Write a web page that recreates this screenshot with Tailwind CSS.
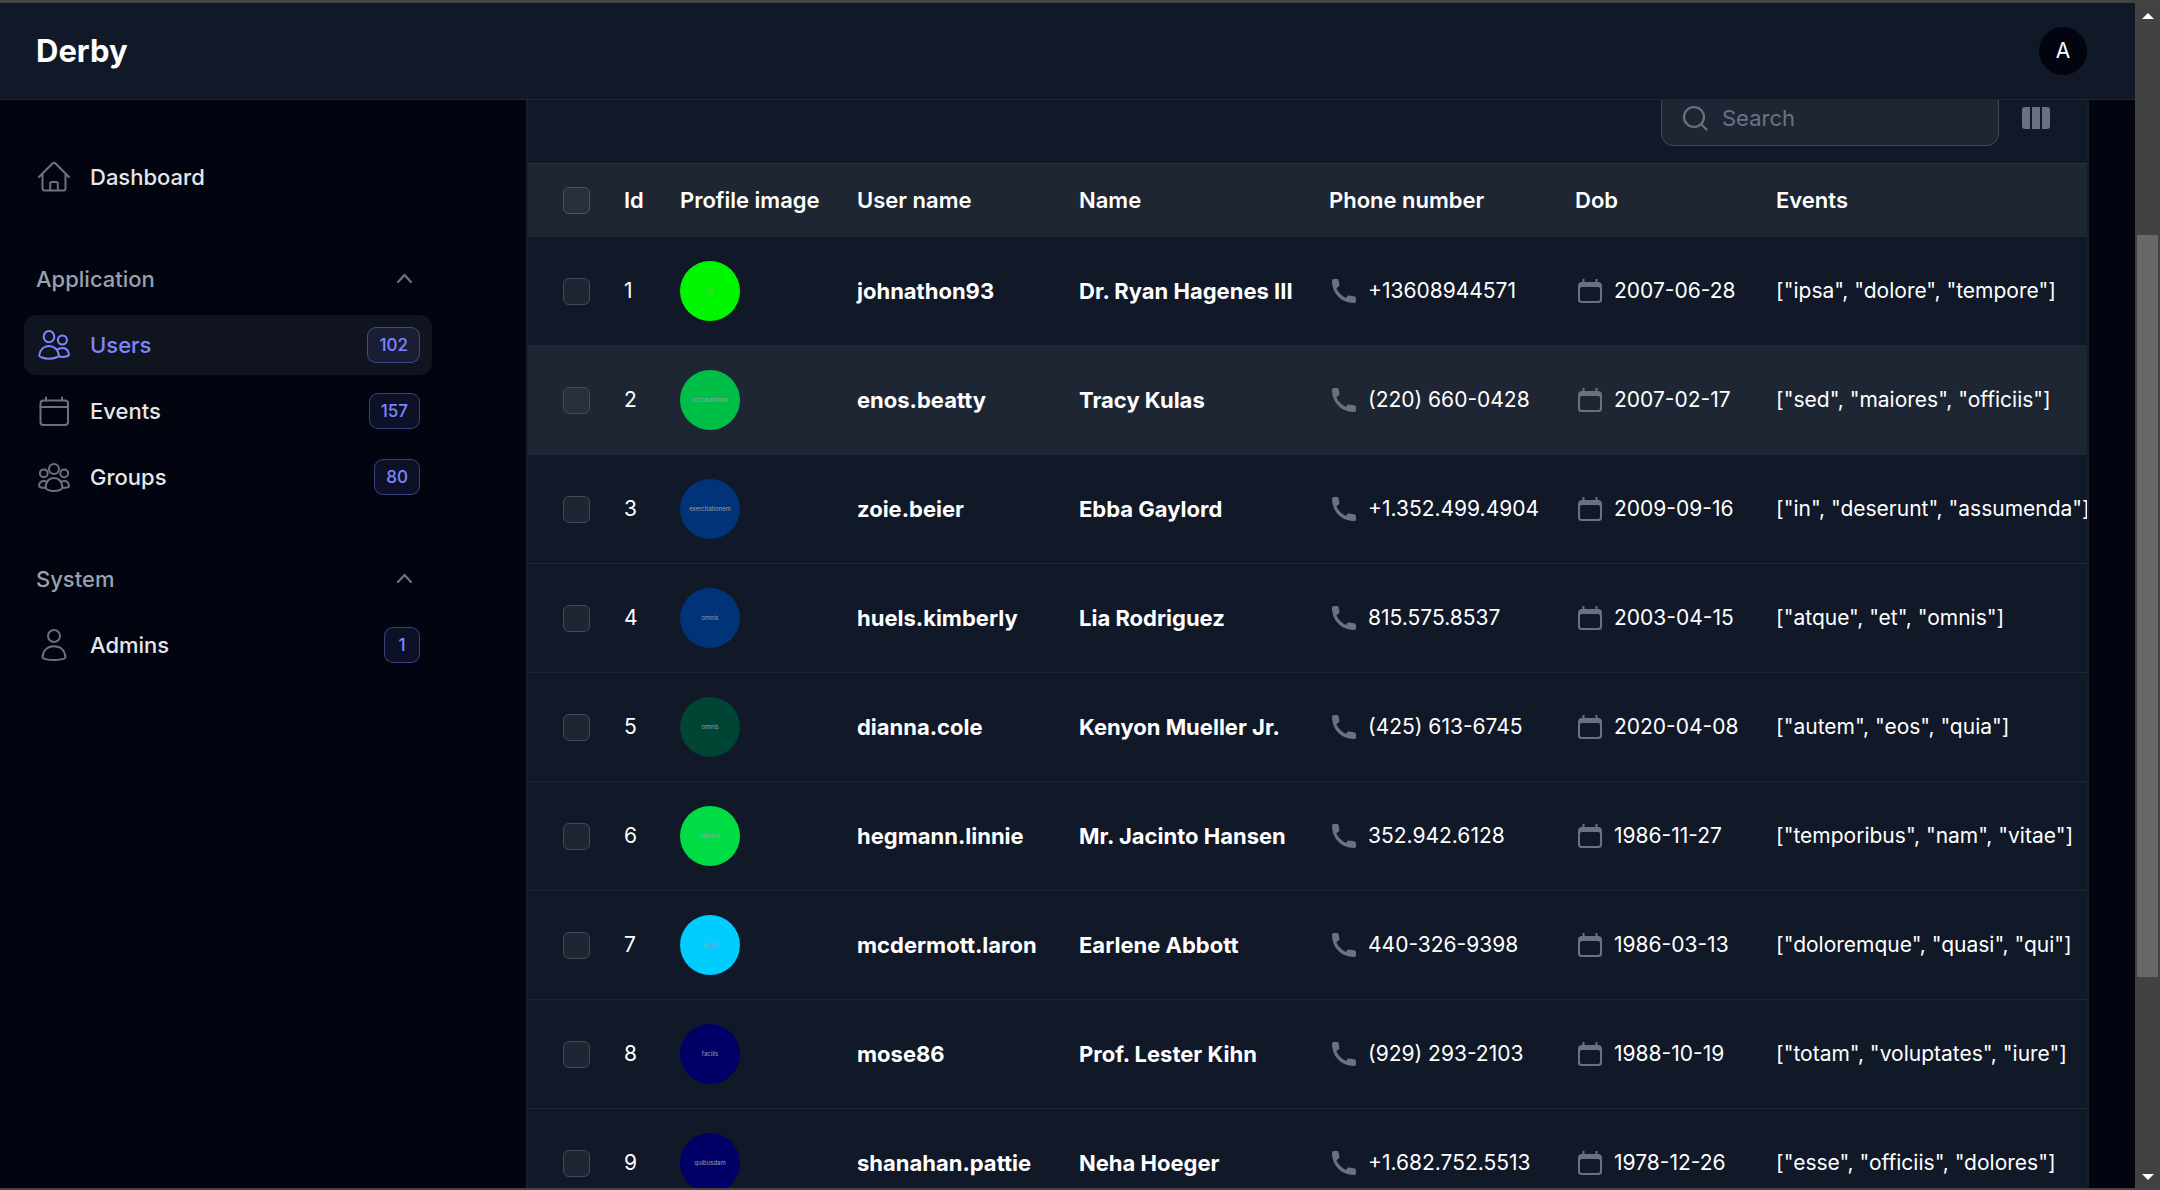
<!DOCTYPE html>
<html lang="en">
<head>
<meta charset="utf-8">
<meta name="viewport" content="width=device-width, initial-scale=1">
<title>Users - Derby</title>
<script src="https://cdn.jsdelivr.net/npm/@tailwindcss/browser@4"></script>
</head>
<body class="flex h-screen flex-col overflow-hidden border-t-[3px] border-b-2 border-[#444444] bg-[#02050f] font-['Inter','Liberation_Sans',sans-serif] text-[21px] leading-9 text-white">

<svg class="hidden" aria-hidden="true">
  <symbol id="phone" viewBox="0 0 24 24"><path fill="currentColor" d="M2 0h3c1 0 1.400.5 1.600 1.500l.8 4.200c.1.800-.1 1.400-.700 1.900L4.300 9.300c2.200 4.500 5.400 7.800 9.700 9.800l1.100-1.800c.5-.7 1.100-1 1.900-.8l5 .8c1.300.2 2 .8 2 2V22c0 1.400-.7 2-2 2C9.500 23.800.400 15.200 0 2 0 .7.7 0 2 0Z"/></symbol>
  <symbol id="cal" viewBox="0 0 24 24"><path fill="currentColor" fill-rule="evenodd" d="M4.500 0h2v3h11V0h2v3h.500a4 4 0 0 1 4 4v13.500a3.500 3.500 0 0 1-3.500 3.500h-17A3.500 3.500 0 0 1 0 20.500V7a4 4 0 0 1 4-4h.500V0ZM4 8a2 2 0 0 0-2 2v10.200A1.800 1.800 0 0 0 3.800 22h16.400a1.800 1.800 0 0 0 1.800-1.800V10a2 2 0 0 0-2-2H4Z"/></symbol>
</svg>

<div class="flex min-h-0 flex-1">
  <div class="flex min-w-0 flex-1 flex-col">
    <header class="flex h-[97px] shrink-0 items-center justify-between border-b border-[#1f2634] bg-[#111827] pr-12 pl-9">
      <a href="#" class="text-[31px] font-bold">Derby</a>
      <button type="button" aria-label="User menu" class="size-12 rounded-full bg-[#02050f]">A</button>
    </header>

    <div class="flex min-h-0 flex-1">
      <nav aria-label="Main" class="flex w-[480px] shrink-0 flex-col gap-[42px] pt-[47px] pr-12 pl-6 text-[22px] font-medium text-gray-200">
        <a href="#" class="flex h-15 items-center gap-[18px] px-3">
          <svg class="size-9 text-gray-500" viewBox="0 0 36 36" fill="none" stroke="currentColor" stroke-width="2" stroke-linecap="round" stroke-linejoin="round"><path d="M3 18 16.500 4.500c1-1 2-1 3 0L33 18M6.500 15v14.500a2 2 0 0 0 2 2h19a2 2 0 0 0 2-2V15M14.200 31.500v-7a1.500 1.500 0 0 1 1.500-1.500h4.600a1.500 1.500 0 0 1 1.500 1.500v7"/></svg>
          Dashboard
        </a>
        <section class="flex flex-col gap-1.5">
          <button type="button" class="flex h-15 items-center justify-between px-3 text-gray-400">Application
            <svg class="size-[30px] text-gray-500" viewBox="0 0 30 30" fill="none" stroke="currentColor" stroke-width="2.200" stroke-linecap="round" stroke-linejoin="round"><path d="m8 18 6.500-7 6.500 7"/></svg>
          </button>
          <a href="#" aria-current="page" class="flex h-15 items-center gap-[18px] rounded-xl bg-[#10141e] px-3 text-indigo-400">
            <svg class="size-9" viewBox="0 0 36 36" fill="none" stroke="currentColor" stroke-width="2" stroke-linejoin="round"><ellipse cx="13" cy="9.700" rx="5.300" ry="5.600"/><circle cx="26.400" cy="13" r="4.500"/><path d="M3.200 28.500C4 22.500 8 19 13 19s9.200 3.500 10 9.500c0 1-4 3.200-10 3.200s-9.800-2.200-9.800-3.200Z"/><path d="M21 22.800c1.500-1.300 3.300-1.900 5.400-1.900 3.700 0 6.200 2.600 6.600 7 0 1-3.500 2-6.600 2-1.300 0-2.400-.1-3.400-.4"/></svg>
            Users
            <span class="ml-auto flex h-9 min-w-9 items-center justify-center rounded-[9px] border border-indigo-400/40 bg-indigo-400/10 px-[11px] text-[17px] text-indigo-400">102</span>
          </a>
          <a href="#" class="flex h-15 items-center gap-[18px] px-3">
            <svg class="size-9 text-gray-500" viewBox="0 0 36 36" fill="none" stroke="currentColor" stroke-width="2" stroke-linecap="round" stroke-linejoin="round"><rect x="4.500" y="7.500" width="27.500" height="24.500" rx="3"/><path d="M4.500 14H32M10 4.500v3M26 4.500v3"/></svg>
            Events
            <span class="ml-auto flex h-9 min-w-9 items-center justify-center rounded-[9px] border border-indigo-400/40 bg-indigo-400/10 px-[11px] text-[17px] text-indigo-400">157</span>
          </a>
          <a href="#" class="flex h-15 items-center gap-[18px] px-3">
            <svg class="size-9 text-gray-500" viewBox="0 0 36 36" fill="none" stroke="currentColor" stroke-width="2" stroke-linecap="round" stroke-linejoin="round"><circle cx="18" cy="10" r="5"/><circle cx="7.800" cy="14.300" r="3.900"/><circle cx="28.200" cy="14.300" r="3.900"/><path d="M9.500 28.500C10.200 22.500 13.500 19 18 19s7.800 3.500 8.500 9.500C26.500 30 23 32 18 32s-8.500-2-8.500-3.500Z"/><path d="M11 22.800c-1-.5-2-.7-3.200-.7-2.800 0-4.500 1.900-4.800 5 0 1.200 3 1.800 6.500 1.600M25 22.800c1-.5 2-.7 3.200-.7 2.800 0 4.500 1.900 4.800 5 0 1.200-3 1.800-6.500 1.600"/></svg>
            Groups
            <span class="ml-auto flex h-9 min-w-9 items-center justify-center rounded-[9px] border border-indigo-400/40 bg-indigo-400/10 px-[11px] text-[17px] text-indigo-400">80</span>
          </a>
        </section>
        <section class="flex flex-col gap-1.5">
          <button type="button" class="flex h-15 items-center justify-between px-3 text-gray-400">System
            <svg class="size-[30px] text-gray-500" viewBox="0 0 30 30" fill="none" stroke="currentColor" stroke-width="2.200" stroke-linecap="round" stroke-linejoin="round"><path d="m8 18 6.500-7 6.500 7"/></svg>
          </button>
          <a href="#" class="flex h-15 items-center gap-[18px] px-3">
            <svg class="size-9 text-gray-500" viewBox="0 0 36 36" fill="none" stroke="currentColor" stroke-width="2" stroke-linejoin="round"><circle cx="18" cy="9" r="6"/><path d="M6.500 30.500C7 23.500 11.500 19.300 18 19.300s11 4.200 11.500 11.200c0 1-5 2.500-11.500 2.500s-11.500-1.500-11.500-2.500Z"/></svg>
            Admins
            <span class="ml-auto flex h-9 min-w-9 items-center justify-center rounded-[9px] border border-indigo-400/40 bg-indigo-400/10 px-[11px] text-[17px] text-indigo-400">1</span>
          </a>
        </section>
      </nav>

      <main class="flex min-w-0 flex-1 pr-[46px] pl-[46px]">
        <section class="min-w-0 flex-1 overflow-hidden border-x-2 border-[#171d2a] bg-[#111827]">
          <div class="flex h-[63px] items-end justify-end gap-[22px] overflow-hidden pr-9 pb-[17px]">
            <label class="flex h-14 w-[338px] shrink-0 items-center rounded-xl border border-[#414855] bg-[#1f2633] pl-5 text-gray-500">
              <svg class="size-[27px]" viewBox="0 0 27 27" fill="none" stroke="currentColor" stroke-width="2.200" stroke-linecap="round"><circle cx="12" cy="12" r="10"/><path d="m19.200 19.200 5.300 5.300"/></svg>
              <input type="search" aria-label="Search" placeholder="Search" class="ml-[13px] min-w-0 flex-1 bg-transparent text-[22px] placeholder:text-gray-500 outline-none">
            </label>
            <button type="button" aria-label="Toggle columns" class="flex h-14 w-[30px] items-center justify-center text-gray-500">
              <svg class="size-[30px]" viewBox="0 0 30 30" fill="currentColor"><path d="M4 4h5v22H4a3 3 0 0 1-3-3V7a3 3 0 0 1 3-3ZM11 4h8v22h-8ZM21 4h5a3 3 0 0 1 3 3v16a3 3 0 0 1-3 3h-5Z"/></svg>
            </button>
          </div>
          <table class="w-full table-fixed border-collapse text-left whitespace-nowrap">
            <colgroup><col class="w-24"><col class="w-14"><col class="w-[177px]"><col class="w-[222px]"><col class="w-[250px]"><col class="w-[246px]"><col class="w-[201px]"><col></colgroup>
            <thead>
              <tr class="h-[73px] border-t border-[#2a313f] bg-[#1f2633] text-[22px]">
                <th class="pl-[35px]"><input type="checkbox" aria-label="Select all" class="block size-[27px] appearance-none rounded-md border border-[#4b5260] bg-[#2a2f3c]"></th>
                <th class="font-semibold">Id</th><th class="font-semibold">Profile image</th><th class="font-semibold">User name</th><th class="font-semibold">Name</th><th class="font-semibold">Phone number</th><th class="font-semibold">Dob</th><th class="font-semibold">Events</th>
              </tr>
            </thead>
            <tbody id="rows"></tbody>
          </table>
        </section>
      </main>
    </div>
  </div>

  <div aria-hidden="true" class="flex w-[25px] shrink-0 flex-col items-center bg-[#424242] pt-2.5 pb-2">
    <svg class="h-1.5 w-3" viewBox="0 0 12 6"><path fill="#fff" d="M6 0 12 6H0Z"/></svg>
    <div class="flex w-full flex-1 flex-col px-0.5">
      <div class="grow-[216]"></div>
      <div class="grow-[742] bg-[#686868]"></div>
      <div class="grow-[197]"></div>
    </div>
    <svg class="h-1.5 w-3" viewBox="0 0 12 6"><path fill="#fff" d="M0 0H12L6 6Z"/></svg>
  </div>
</div>

<script>
const users = [
  ['johnathon93', 'Dr. Ryan Hagenes III', '+13608944571', '2007-06-28', '["ipsa", "dolore", "tempore"]', '#00f500', 'et'],
  ['enos.beatty', 'Tracy Kulas', '(220) 660-0428', '2007-02-17', '["sed", "maiores", "officiis"]', '#00bf47', 'accusantium'],
  ['zoie.beier', 'Ebba Gaylord', '+1.352.499.4904', '2009-09-16', '["in", "deserunt", "assumenda"]', '#003377', 'exercitationem'],
  ['huels.kimberly', 'Lia Rodriguez', '815.575.8537', '2003-04-15', '["atque", "et", "omnis"]', '#003377', 'omnis'],
  ['dianna.cole', 'Kenyon Mueller Jr.', '(425) 613-6745', '2020-04-08', '["autem", "eos", "quia"]', '#004433', 'omnis'],
  ['hegmann.linnie', 'Mr. Jacinto Hansen', '352.942.6128', '1986-11-27', '["temporibus", "nam", "vitae"]', '#00dd44', 'ratione'],
  ['mcdermott.laron', 'Earlene Abbott', '440-326-9398', '1986-03-13', '["doloremque", "quasi", "qui"]', '#00ccff', 'iusto'],
  ['mose86', 'Prof. Lester Kihn', '(929) 293-2103', '1988-10-19', '["totam", "voluptates", "iure"]', '#000066', 'facilis'],
  ['shanahan.pattie', 'Neha Hoeger', '+1.682.752.5513', '1978-12-26', '["esse", "officiis", "dolores"]', '#000066', 'quibusdam'],
];
document.getElementById('rows').innerHTML = users.map(([login, name, phone, dob, events, colour, word], i) => {
  const hovered = i === 1;
  return `<tr class="h-[109px] border-t border-[#1f2634] ${hovered ? 'bg-[#1f2633]' : ''}">
    <td class="pl-[35px]"><input type="checkbox" aria-label="Select ${login}" class="block size-[27px] appearance-none rounded-md border border-[#434956] ${hovered ? 'bg-[#2a2f3c]' : 'bg-[#1f2633]'}"></td>
    <td>${i + 1}</td>
    <td><span class="flex size-15 items-center justify-center rounded-full text-[6px] text-gray-400" style="background:${colour}">${word}</span></td>
    <td class="text-[22px] font-bold">${login}</td>
    <td class="text-[22px] font-bold">${name}</td>
    <td><span class="flex items-center gap-3 pl-[3px]"><svg class="size-6 shrink-0 text-gray-500"><use href="#phone"/></svg>${phone}</span></td>
    <td><span class="flex items-center gap-3 pl-[3px]"><svg class="size-6 shrink-0 text-gray-500"><use href="#cal"/></svg>${dob}</span></td>
    <td>${events}</td>
  </tr>`;
}).join('');
</script>
</body>
</html>
